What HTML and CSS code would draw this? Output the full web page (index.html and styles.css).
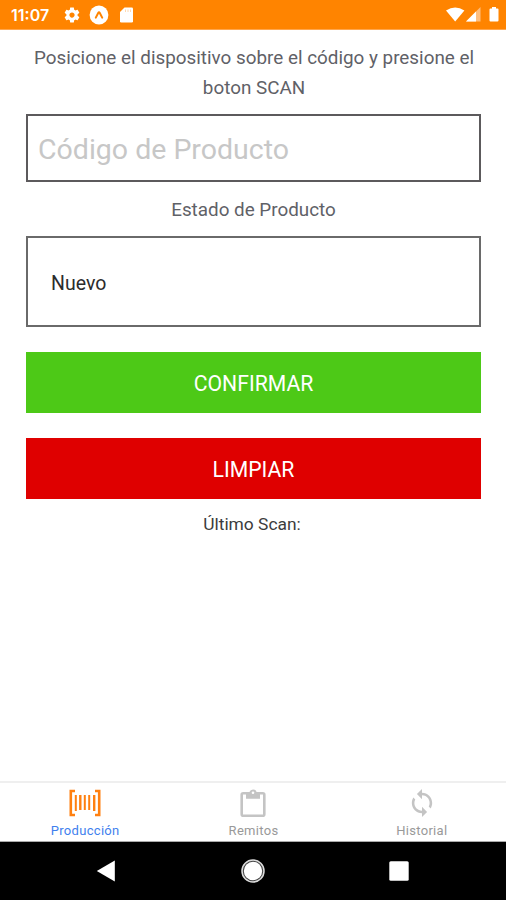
FILE: index.html
```html
<!DOCTYPE html>
<html lang="es">
<head>
<meta charset="utf-8">
<title>Producción</title>
<link rel="stylesheet" href="styles.css">
</head>
<body>
<div class="screen">
  <header class="status">
    <span class="clock">11:07</span>
    <svg class="gear" width="18" height="18" viewBox="0 0 24 24"><path fill="#fff" d="M19.43 12.98c.04-.32.07-.64.07-.98s-.03-.66-.07-.98l2.11-1.65c.19-.15.24-.42.12-.64l-2-3.46c-.12-.22-.39-.3-.61-.22l-2.49 1c-.52-.4-1.08-.73-1.69-.98l-.38-2.65C14.46 2.18 14.25 2 14 2h-4c-.25 0-.46.18-.49.42l-.38 2.65c-.61.25-1.17.59-1.69.98l-2.49-1c-.23-.09-.49 0-.61.22l-2 3.46c-.13.22-.07.49.12.64l2.11 1.65c-.04.32-.07.65-.07.98s.03.66.07.98l-2.11 1.65c-.19.15-.24.42-.12.64l2 3.46c.12.22.39.3.61.22l2.49-1c.52.4 1.08.73 1.69.98l.38 2.65c.03.24.24.42.49.42h4c.25 0 .46-.18.49-.42l.38-2.65c.61-.25 1.17-.59 1.69-.98l2.49 1c.23.09.49 0 .61-.22l2-3.46c.12-.22.07-.49-.12-.64l-2.11-1.65zM12 15.5c-1.93 0-3.5-1.57-3.5-3.5s1.570-3.500 3.500-3.500 3.500 1.570 3.500 3.500-1.570 3.500-3.500 3.500z"/></svg>
    <svg class="expo" width="20" height="20" viewBox="0 0 20 20"><circle cx="10" cy="10" r="9.400" fill="#fff"/><path d="M6.800 12.600 9.200 8Q10 6.600 10.800 8L13.200 12.600" fill="none" stroke="#ff8400" stroke-width="2" stroke-linecap="round"/></svg>
    <svg class="card" width="13" height="16" viewBox="0 0 13 16"><path fill="#fff" d="M4.500.5h7.200Q13 .5 13 1.800v12.400q0 1.300-1.300 1.300H1.300Q0 15.500 0 14.200V5z"/><path stroke="#ffd9b0" stroke-width="1" d="M5.500 2.500v2.500M8 2.500v2.500M10.500 2.500v2.500"/></svg>
    <svg class="signals" width="56" height="18" viewBox="0 0 56 18"><path fill="#fff" d="M0 4.500Q9.200-1.500 18.400 4.500L9.200 15.500z"/><path fill="#ffbe7d" d="M34.500 1v14.500H20z"/><path fill="#fff" d="M30 5.500v10H20z"/><path fill="#fff" d="M46 1h4v1.500h1.500q1 0 1 1v11q0 1-1 1h-7q-1 0-1-1v-11q0-1 1-1H46z"/></svg>
  </header>
  <main class="content">
    <p class="prompt">Posicione el dispositivo sobre el código y presione el boton SCAN</p>
    <input class="code" type="text" placeholder="Código de Producto">
    <p class="label">Estado de Producto</p>
    <div class="select">Nuevo</div>
    <button class="btn confirm">CONFIRMAR</button>
    <button class="btn clear">LIMPIAR</button>
    <p class="last">Último Scan:</p>
  </main>
  <nav class="tabs">
    <a class="tab active">
      <svg width="32" height="28" viewBox="0 0 32 28" fill="none" stroke="#ff8010"><path stroke-width="2.600" d="M6 2H1.800V26H6M26 2h4.200V26H26"/><path stroke-width="2" d="M6.800 6v16M15.800 6v15M20.200 6v15"/><path stroke-width="2.400" d="M11.300 6v15M25.200 6v16"/></svg>
      <span>Producción</span>
    </a>
    <a class="tab">
      <svg width="32" height="28" viewBox="0 0 32 28"><rect x="4.700" y="4.300" width="22.600" height="22.400" rx="1.500" fill="none" stroke="#c4c4c4" stroke-width="2.600"/><path fill="#c4c4c4" d="M9 3h3.400a3.800 3.800 0 0 1 7.200 0H23v6.800H9z"/><circle cx="16" cy="3.800" r="1.300" fill="#fff"/></svg>
      <span>Remitos</span>
    </a>
    <a class="tab">
      <svg width="28" height="28" viewBox="1 1 22 22"><path fill="#c4c4c4" d="M12 4V1L8 5l4 4V6c3.310 0 6 2.690 6 6 0 1.010-.25 1.970-.7 2.800l1.460 1.460C19.540 15.030 20 13.570 20 12c0-4.420-3.580-8-8-8zm0 14c-3.310 0-6-2.690-6-6 0-1.010.25-1.970.7-2.800L5.240 7.740C4.460 8.970 4 10.430 4 12c0 4.420 3.580 8 8 8v3l4-4-4-4v3z"/></svg>
      <span>Historial</span>
    </a>
  </nav>
  <footer class="system">
    <svg width="20" height="22" viewBox="0 0 20 22"><path fill="#fff" d="M18.800.5v21L.8 11z"/></svg>
    <svg width="24" height="24" viewBox="0 0 24 24"><circle cx="12" cy="12" r="11" fill="#444" stroke="#ddd" stroke-width="1.500"/><circle cx="12" cy="12" r="9.200" fill="#fff"/></svg>
    <svg width="20" height="20" viewBox="0 0 20 20"><rect x=".3" y=".3" width="19.400" height="19.400" rx="1.500" fill="#fff"/></svg>
  </footer>
</div>
</body>
</html>
```
FILE: styles.css
```css
* { box-sizing: border-box; }
body { margin: 0; background: #fff; font-family: Roboto, "Liberation Sans", sans-serif; }
p { margin: 0; }
.screen { display: flex; flex-direction: column; height: 900px; }
.status { display: flex; align-items: center; height: 30px; padding: 1px 4px 0 11px; background: #ff8400; border-bottom: 1px solid #ffa64d; color: #fff; }
.clock { width: 41px; font: 600 16px/30px Inter, sans-serif; letter-spacing: 0; white-space: nowrap; }
.gear { margin-left: 11px; }
.expo { margin-left: 8px; }
.card { margin-left: 11px; }
.signals { margin-left: auto; }
.content { flex: 1; display: flex; flex-direction: column; padding: 14px 25px 0 26px; text-align: center; }
.prompt { height: 60px; padding-left: 1px; font-size: 18.85px; line-height: 29.500px; color: #5f6167; }
.code { width: 100%; height: 68px; margin: 10px 0 0; padding: 2px 10px 0; border: 2px solid #5c5a5c; border-radius: 0; background: #fff; font: 28.5px Roboto, sans-serif; }
.code::placeholder { color: #c7c7c7; opacity: 1; }
.label { margin-top: 14px; height: 30px; font-size: 18.85px; line-height: 29px; color: #5f6167; }
.select { height: 91px; margin-top: 10px; padding-left: 23px; border: 2px solid #6a6a6a; font-size: 19.5px; line-height: 91px; text-align: left; color: #2c2c2c; }
.btn { width: 100%; height: 61px; border: 0; padding: 2px 0 0; color: #fff; font: 400 21.2px Roboto, sans-serif; }
.confirm { margin-top: 25px; background: #4dc917; }
.clear { margin-top: 25px; background: #df0000; }
.last { margin-top: 11px; padding-right: 3px; font-size: 17.4px; line-height: 29px; color: #3c3c3c; }
.tabs { display: flex; height: 61px; padding-left: 1px; border-top: 2px solid #efefef; border-bottom: 1px solid #aaa; }
.tab { flex: 1; display: flex; flex-direction: column; align-items: center; padding-top: 6px; font-size: 13px; line-height: 16px; letter-spacing: 0.3px; color: #999; }
.tab span { margin-top: 6px; }
.active { color: #3f7fee; }
.system { display: flex; align-items: center; justify-content: space-between; height: 58px; padding: 0 97px 0 96px; background: #000; }
```
